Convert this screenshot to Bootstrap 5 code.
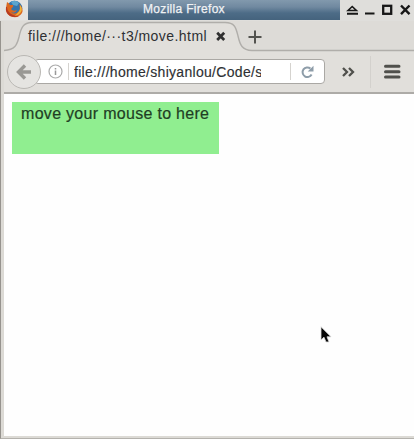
<!DOCTYPE html>
<html lang="en">
<head>
<meta charset="utf-8">
<title>Mozilla Firefox</title>
<meta name="viewport" content="width=device-width, initial-scale=1">
<link href="https://cdn.jsdelivr.net/npm/bootstrap@5.3.0/dist/css/bootstrap.min.css" rel="stylesheet">
<style>
body{font-family:"Liberation Sans",Arial,sans-serif;height:439px;overflow:hidden;background:#dcdad5;color:#2e3033}
svg{display:block;flex:none}
.titlebar{height:21px;background:#dfdedb}
.app-logo{width:28px;height:20px;padding-left:5px;background:#e4e3e1}
.caption{width:312px;height:20px;background:linear-gradient(#8299ad,#7089a0 35%,#4d6c87 65%,#45637d);color:#f0f2f4;font-size:12px;line-height:19px;-webkit-text-stroke:.25px #f0f2f4}
.caption span{letter-spacing:.3px}
.win-body{border-left:1px solid #96938e;padding-left:3px;height:418px;border-bottom:1px solid #b4b2ad;padding-bottom:2px}
.tabstrip{height:30px;background:#dddbd7}
.tab-item{padding-left:24px;height:30px;width:234px}
.tab-shape{left:0;top:0}
.tab-label{font-size:14px;letter-spacing:.45px;width:188px;line-height:31px;white-space:nowrap}
.toolbar{height:43px;background:#e1dfdb;border-bottom:2px solid #adaba7}
.back{width:34px;height:34px;border:1px solid #bab8b4;background:#e5e4e1;margin-left:3px;z-index:2}
.urlbar{width:291px;height:25px;margin-left:-7px;margin-right:2px;border:1px solid #aaa8a4;background:#fff;padding-left:13px}
.sep{width:1px;height:17px;background:#d5d3cf}
.url{font-size:14px;letter-spacing:.3px;width:187px;margin-left:5px;overflow:hidden;white-space:nowrap;line-height:22px;-webkit-text-stroke:.15px #2e3033}
.page{background:#fefefe;padding:8px}
.target-box{width:207px;height:52px;background:#90ee90;color:#213e24;font-size:16px;line-height:23px;letter-spacing:.3px;padding-left:9px;white-space:nowrap;-webkit-text-stroke:.2px #213e24}
.pointer{left:320px;top:326px}
</style>
<script src="https://cdn.jsdelivr.net/npm/bootstrap@5.3.0/dist/js/bootstrap.bundle.min.js"></script>
</head>
<body class="position-relative">
<header class="titlebar d-flex align-items-start">
  <div class="app-logo">
    <svg width="19" height="19" viewBox="0 0 19 19">
      <circle cx="9.5" cy="8.5" r="7.8" fill="#3474ad"/>
      <path d="M6 2Q10-1 14 3L12 6 8 5z" fill="#5ba5cf"/>
      <path d="M2 2Q4 3 5 5L8 5Q9 6 7 8L6 9Q8 12 12 10Q10 14 6 12Q9 15 13 12Q16 9 14 4Q19 8 17 13Q14 18 8 17Q1 16 1 8Z" fill="#dc681f"/>
      <path d="M15 5Q18 9 16 12Q13 16 9 16Q14 13 15 9Z" fill="#efb53c"/>
      <path d="M1 7Q0 13 5 16Q10 18 14 16Q7 16 4 12Q2 10 2 7Z" fill="#b83b22"/>
    </svg>
  </div>
  <div class="caption text-center"><span>Mozilla Firefox</span></div>
  <svg width="74" height="20" viewBox="0 0 74 20" fill="none" stroke="#171717" stroke-width="2">
    <path d="M8 10.500L12.200 6.500L16.400 10.500Z" stroke-width="1.600"/><path d="M7 13.700H18M25 13.500H34.500"/>
    <rect x="43.200" y="5.800" width="8" height="8" stroke-width="2.300"/><path d="M61 5.500L69.500 14.200M69.500 5.500L61 14.200" stroke-width="2.400"/>
  </svg>
</header>
<main class="win-body d-flex flex-column">
  <div class="tabstrip d-flex position-relative">
    <svg class="tab-shape position-absolute" width="410" height="31" viewBox="0 0 410 31">
      <path d="M0 29.500C11 29 13 24 15 16C17 7 19 1.500 28 1.500H221C231 1.500 232 7 234 15C236 24 238 29 248 29.500H410V31H0Z" fill="#e1dfdb"/>
      <path d="M0 29.500C11 29 13 24 15 16C17 7 19 1.500 28 1.500H221C231 1.500 232 7 234 15C236 24 238 29 248 29.500H410" fill="none" stroke="#b0aeaa" stroke-width="1.400"/>
    </svg>
    <div class="tab-item d-flex align-items-center position-relative">
      <span class="tab-label">file:///home/···t3/move.html</span>
      <svg width="10" height="10" viewBox="0 0 10 10"><path d="M1.200 1.700L8.200 9M8.200 1.700L1.200 9" stroke="#303030" stroke-width="2.700"/></svg>
    </div>
    <svg class="position-relative" width="30" height="30" viewBox="0 0 30 30"><path d="M10.500 16H23.500M17 9.500V22.500" stroke="#53534f" stroke-width="2"/></svg>
  </div>
  <nav class="toolbar d-flex align-items-center flex-shrink-0">
    <div class="back rounded-circle d-flex align-items-center justify-content-center position-relative">
      <svg width="18" height="18" viewBox="0 0 18 18"><path d="M10 2.500L3.500 9L10 15.500M4 9H16" fill="none" stroke="#999894" stroke-width="3.400"/></svg>
    </div>
    <div class="urlbar d-flex align-items-center rounded-1">
      <svg width="16" height="15" viewBox="0 0 16 15"><circle cx="7.500" cy="7.500" r="6.500" fill="none" stroke="#aaa" stroke-width="1.200"/><path d="M7.500 6.500V11M7.500 3.900V5.500" stroke="#999" stroke-width="1.500"/></svg>
      <div class="sep ms-1 me-0"></div><div class="url">file:///home/shiyanlou/Code/s</div>
      <div class="sep ms-auto"></div>
      <svg class="mx-2" width="17" height="16" viewBox="0 0 17 16"><path d="M12.600 10.500A4.800 4.800 0 1 1 11.400 4.500" fill="none" stroke="#8e9da9" stroke-width="2"/><path d="M14.500 1.700V7.500H8.700Z" fill="#8e9da9"/></svg>
    </div>
    <svg width="87" height="40" viewBox="0 0 87 40" fill="none">
      <path d="M16 16L20 20L16 24M22 16L26 20L22 24" stroke="#50504c" stroke-width="2.300"/><path d="M43.500 4V36" stroke="#d3d1cd"/>
      <path d="M58.500 14.300H72M58.500 19.700H72M58.500 25H72" stroke="#50504c" stroke-width="3" stroke-linecap="round"/>
    </svg>
  </nav>
  <section class="page flex-grow-1"><div class="target-box">move your mouse to here</div></section>
</main>
<svg class="pointer position-absolute" width="14" height="19" viewBox="0 0 14 19"><path d="M1 .8V14L4 11.200L6 16H9L7 10.800H11Z" fill="#050505" stroke="#ddd" stroke-width=".8"/></svg>
</body>
</html>
